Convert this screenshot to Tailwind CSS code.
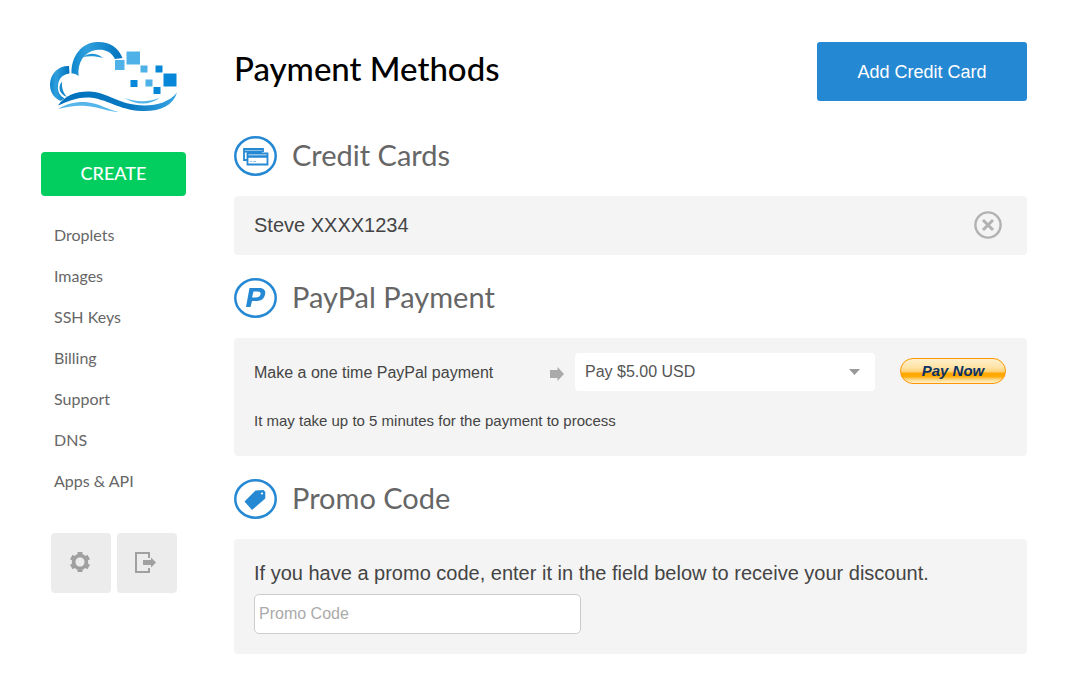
<!DOCTYPE html>
<html lang="en">
<head>
<meta charset="utf-8">
<meta name="viewport" content="width=device-width, initial-scale=1">
<title>Payment Methods</title>
<script src="https://cdn.jsdelivr.net/npm/@tailwindcss/browser@4"></script>
</head>
<body class="bg-white font-['Liberation_Sans',Arial,sans-serif] text-[#444]">
<div class="flex gap-12 pl-[41px] pr-[63px]">

  <aside class="w-[145px] shrink-0 pt-10 font-['Lato',sans-serif]">
    <a href="#" aria-label="Home" class="ml-2 block">
      <svg class="h-[72px] w-[130px]" viewBox="49 40 130 72" fill="none">
        <defs>
          <linearGradient id="arc" x1="0" x2="1"><stop offset="0" stop-color="#0d86cd"/><stop offset=".3" stop-color="#2f9fdc"/><stop offset="1" stop-color="#0072bd"/></linearGradient>
          <linearGradient id="wave" x1="0" x2="1"><stop offset="0" stop-color="#0072bd"/><stop offset=".6" stop-color="#0878c2"/><stop offset="1" stop-color="#38a5e2"/></linearGradient>
        </defs>
        <path fill="url(#arc)" d="M60.500 101C52 97 50 90 50 84C50.500 73 59 65.500 69 66L69.500 73.500C62 74.500 58.500 79 58 86C57.500 92 60 95.500 64.500 98.500Z"/>
        <path fill="#1689cf" d="M67 97C59 94 57.500 87 62 81.500C61.500 88 63 92.500 67 97Z"/>
        <path fill="url(#arc)" d="M71.500 73.500C71 56 82 42.500 97 42C109 41.500 118 47 122.500 58L115 59C111 51 103.500 49 96 50C84 52 77.500 62 78.500 76C76 74 74 73.500 71.500 73.500Z"/>
        <path fill="#2394d7" d="M82.500 57C88 53 96 52 103 58C96 56 90 55.500 82.500 57Z"/>
        <path fill="url(#wave)" d="M58 105.500C65 95 77 91 90 91.500C104 92.500 112 98.500 126 103C145 108 166 106 177 92.500C173 106 159 112 141 111C119 110 106 98.500 89 97.500C76 97 67 102 58 105.500Z"/>
        <path fill="#55b6ea" d="M58 109C66 104 75 101.500 86 102C99 103 108 110 119 112C108 111.500 99 107 86 106C75 105 68 107 58 109ZM124 97.500C135 102.500 149 102.500 160 97.500C150 105.500 136 105.500 124 97.500Z"/>
        <path fill="#4eb1e7" d="M115 60h9.500v10h-9.500zM126.500 51.500h13.500v13h-13.500zM140.500 65.500h7v7h-7zM145.500 79.500h7v7h-7z"/>
        <path fill="#0787d8" d="M155.500 65.500h7v7h-7zM163.500 73.500h13v13h-13zM130.500 80h7v7h-7zM153.500 87h7v7h-7z"/>
      </svg>
    </a>
    <button type="button" class="mt-10 block h-11 w-full rounded bg-[#02ce60] pb-[2px] text-lg font-medium text-white">CREATE</button>
    <nav class="mt-5 ml-[13px] flex flex-col text-base text-[#666]">
      <a href="#" class="h-[41px] leading-[38px]">Droplets</a>
      <a href="#" class="h-[41px] leading-[38px]">Images</a>
      <a href="#" class="h-[41px] leading-[38px]">SSH Keys</a>
      <a href="#" class="h-[41px] leading-[38px]">Billing</a>
      <a href="#" class="h-[41px] leading-[38px]">Support</a>
      <a href="#" class="h-[41px] leading-[38px]">DNS</a>
      <a href="#" class="h-[41px] leading-[38px]">Apps &amp; API</a>
    </nav>
    <div class="mt-[30px] ml-[10px] flex gap-[6px]">
      <button type="button" aria-label="Settings" class="grid size-[60px] place-items-center rounded bg-[#ececec] pr-[2px] pb-[2px]">
        <svg class="size-5" viewBox="0 0 20 20" fill="none">
          <circle cx="10" cy="10" r="6.200" stroke="#a0a0a0" stroke-width="4"/>
          <path stroke="#a0a0a0" stroke-width="5" stroke-linejoin="round" d="M10 0v4M10 16v4M1.300 5l3.200 1.900M15.500 13.100l3.200 1.900M1.300 15l3.200-1.900M15.500 6.900L18.700 5"/>
          <circle cx="10" cy="10" r="4.500" fill="#ececec"/>
        </svg>
      </button>
      <button type="button" aria-label="Log out" class="grid size-[60px] place-items-center rounded bg-[#ececec] pr-[3px] pb-[1px]">
        <svg class="h-[21px] w-[21px]" viewBox="0 0 21 21" fill="none">
          <path stroke="#a0a0a0" stroke-width="2" d="M14 6V1H1v19h13v-4"/>
          <path fill="#a0a0a0" d="M8 8h8V5.500l5 5-5 5V13H8z"/>
        </svg>
      </button>
    </div>
  </aside>

  <main class="min-w-0 flex-1 pt-[42px] pb-10">
    <header class="flex h-[59px] items-start justify-between">
      <h1 class="font-['Lato',sans-serif] text-[33px] leading-[53px] font-medium text-black">Payment Methods</h1>
      <button type="button" class="h-[59px] w-[210px] rounded-[3px] bg-[#2588d3] text-lg text-white">Add Credit Card</button>
    </header>

    <section class="mt-[35px]">
      <div class="flex h-10 items-center gap-[15px]">
        <svg class="h-10 w-[43px] shrink-0" viewBox="0 0 43 40" fill="none" stroke="#2588d3">
          <ellipse cx="21.500" cy="20" rx="20.200" ry="18.700" stroke-width="2.500"/>
          <path stroke-width="1.800" d="M13 24h-3V13h19v3"/>
          <path stroke-width="1.800" d="M10 15.500h18M13.500 17.500h20v11h-20z"/>
          <path stroke-width="2.500" d="M13 20.500h21"/>
          <path stroke-width="1" stroke-opacity=".5" d="M16 25.500h2M19 25.500h3"/>
        </svg>
        <h2 class="font-['Lato',sans-serif] text-[29px] leading-9 text-[#666] pb-[3px]">Credit Cards</h2>
      </div>
      <div class="mt-5 flex h-[59px] items-center justify-between rounded bg-[#f4f4f4] pr-[25px] pb-[2px] pl-5">
        <span class="text-xl">Steve XXXX1234</span>
        <button type="button" aria-label="Remove card">
          <svg class="size-7" viewBox="0 0 28 28" fill="none" stroke="#b2b2b2">
            <circle cx="14" cy="14" r="12.600" stroke-width="2.400"/>
            <path stroke-width="3" d="M9 9l10 10M19 9L9 19"/>
          </svg>
        </button>
      </div>
    </section>

    <section class="mt-[23px]">
      <div class="flex h-10 items-center gap-[15px]">
        <svg class="h-10 w-[43px] shrink-0" viewBox="0 0 43 40" fill="none">
          <ellipse cx="21.500" cy="20" rx="20.200" ry="18.700" stroke="#2588d3" stroke-width="2.500"/>
          <path fill="#2588d3" fill-rule="evenodd" d="M15.500 10H25c5 0 7 2.500 6 6.500-1 4.500-4 6.500-9 6.500h-4l-1.500 6H12zM19.500 13.500L18 19.500h3.500c3 0 4.500-1 5-3s-.5-3-3-3z"/>
        </svg>
        <h2 class="font-['Lato',sans-serif] text-[29px] leading-9 text-[#666] pb-[3px]">PayPal Payment</h2>
      </div>
      <form class="mt-5 h-[118px] rounded bg-[#f4f4f4] pt-[15px] pr-[21px] pl-5">
        <div class="flex h-[38px] items-center">
          <label for="amount" class="flex-1 pt-[2px] text-base">Make a one time PayPal payment</label>
          <svg class="mt-1 mr-[11px] h-[14px] w-[14px]" viewBox="0 0 14 14" fill="#aaa"><path d="M0 3h7.500V0L14 7l-6.500 7v-3H0z"/></svg>
          <div class="relative w-[300px]">
            <select id="amount" class="h-[38px] w-full appearance-none rounded bg-white px-[10px] text-base text-[#555]"><option>Pay $5.00 USD</option></select>
            <svg class="pointer-events-none absolute top-4 right-[15px] h-[6px] w-[11px]" viewBox="0 0 11 6" fill="#999"><path d="M0 0h11L5.500 6z"/></svg>
          </div>
          <button type="button" class="mb-[2px] ml-[25px] h-[26px] w-[106px] rounded-full border border-[#ff9500] bg-[linear-gradient(#fff0cc_0%,#ffe3a6_35%,#ffd277_52%,#ffa800_60%,#ffa800_72%,#ffd67c_85%,#fff3d6_100%)] text-[15px] leading-6 font-bold text-[#0a3164] italic">Pay Now</button>
        </div>
        <p class="mt-5 text-[15px] leading-5">It may take up to 5 minutes for the payment to process</p>
      </form>
    </section>

    <section class="mt-[23px]">
      <div class="flex h-10 items-center gap-[15px]">
        <svg class="h-10 w-[43px] shrink-0" viewBox="0 0 43 40" fill="none">
          <ellipse cx="21.500" cy="20" rx="20.200" ry="18.700" stroke="#2588d3" stroke-width="2.500"/>
          <path fill="#2588d3" d="M10.500 22.500L21.500 11.500l8-.5 1.800 2v6.500L18 31z"/>
          <circle cx="28" cy="14.500" r="1.100" fill="#fff"/>
        </svg>
        <h2 class="font-['Lato',sans-serif] text-[29px] leading-9 text-[#666] pb-[3px]">Promo Code</h2>
      </div>
      <form class="mt-5 h-[115px] rounded bg-[#f4f4f4] px-5 pt-5">
        <label for="promo" class="block text-xl leading-7">If you have a promo code, enter it in the field below to receive your discount.</label>
        <input id="promo" type="text" placeholder="Promo Code" class="mt-[7px] block h-10 w-[327px] rounded-[5px] border border-[#ccc] bg-white px-1 text-base placeholder:text-[#aaa]">
      </form>
    </section>
  </main>
</div>
</body>
</html>
